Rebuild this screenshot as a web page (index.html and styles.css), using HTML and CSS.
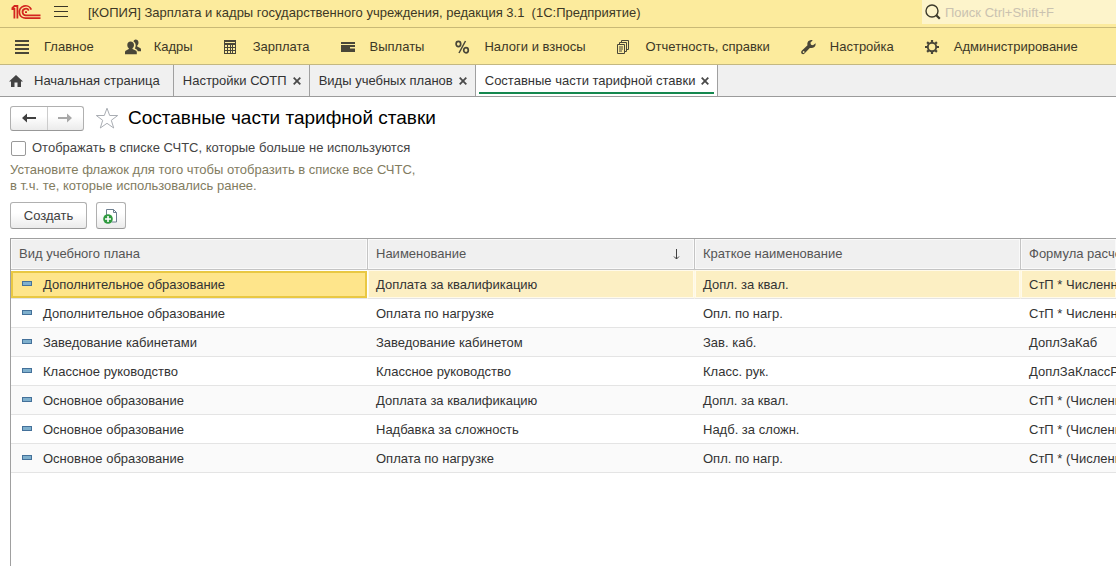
FILE: index.html
```html
<!DOCTYPE html>
<html lang="ru">
<head>
<meta charset="utf-8">
<title>Составные части тарифной ставки</title>
<link rel="stylesheet" href="styles.css">
</head>
<body>
<header class="titlebar">
  <svg class="logo" viewBox="0 0 30 16" fill="none" stroke="#d3261f" stroke-width="1.8">
    <path d="M.5 5H3.400V14.500M1 4.500 3.500 2H6.400V14.500"/>
    <path d="M20.300 5.700A6.200 6.200 0 1 0 15 14.200H29.500"/>
    <path d="M17.800 6.500A3.300 3.300 0 1 0 15 11.300H29.500"/>
    <path d="M14 8.200h2"/>
  </svg>
  <button class="burger" aria-label="Меню"><svg viewBox="0 0 14 12" width="14" height="12" stroke="#3a3626"><path d="M0 .5h14M0 5.500h14M0 10.500h14"/></svg></button>
  <h1 class="app-title">[КОПИЯ] Зарплата и кадры государственного учреждения, редакция 3.1&nbsp; (1С:Предприятие)</h1>
  <label class="search">
    <svg viewBox="0 0 16 16" width="16" height="16" fill="none" stroke="#3d3a2c"><circle cx="7" cy="7" r="6" stroke-width="1.4"/><path d="m11.300 11.300 3.500 3.500" stroke-width="2.200"/></svg>
    <input type="search" placeholder="Поиск Ctrl+Shift+F" aria-label="Поиск">
  </label>
</header>

<nav class="sections">
  <a href="#" class="section"><svg viewBox="0 0 16 16"><path d="M0 1h14v2H0zM0 5h14v2H0zM0 9h14v2H0zM0 13h14v2H0z"/></svg>Главное</a>
  <a href="#" class="section"><svg viewBox="0 0 16 16"><path d="M10.600.5c1.700 0 2.900 1.200 2.900 3 0 1.300-.5 2.400-1.300 3v1l2.900 1.400c.7.400.9 1 .9 1.900v1.400h-3.200c-.3-1-1-1.700-2-2.100l-.9-.5c.6-1.100.8-2.300.8-3.300 0-1.700-.9-3.200-2.200-3.900.4-1.200 1.200-1.900 2.100-1.900z"/><path d="M5.600 2.600c2 0 3.400 1.300 3.400 3.300 0 1.400-.7 2.600-1.500 3.200v.9l3.200 1.400c.8.400 1.100 1 1.100 1.900v1.900H0v-1.900c0-.9.300-1.500 1.100-1.900L3.800 10v-.9c-.9-.6-1.500-1.800-1.500-3.200 0-2 1.300-3.300 3.300-3.300z"/></svg>Кадры</a>
  <a href="#" class="section"><svg viewBox="0 0 16 16"><path fill-rule="evenodd" d="M0 1h12v14H0zM1 3v1h10V3zM1 6v2h2V6zM4 6v2h2V6zM7 6v2h1V6zM9 6v2h2V6zM1 9v2h2V9zM4 9v2h2V9zM7 9v2h1V9zM9 9v2h2V9zM1 12v2h2v-2zM4 12v2h2v-2zM7 12v2h1v-2zM9 12v2h2v-2z"/></svg>Зарплата</a>
  <a href="#" class="section"><svg viewBox="0 0 16 16"><path d="M0 3h14v2H0zM0 6h14v2H9v1.500h5V13H0z"/></svg>Выплаты</a>
  <a href="#" class="section"><svg viewBox="0 0 16 16" fill="none" stroke="#494638" stroke-width="1.700"><ellipse cx="3.400" cy="5" rx="2.300" ry="2.600"/><ellipse cx="11" cy="11.200" rx="2.300" ry="2.600"/><path d="M10.500 2 4 14" stroke-width="1.500"/></svg>Налоги и взносы</a>
  <a href="#" class="section"><svg viewBox="0 0 16 16" fill="none" stroke="#494638"><path d="M.5 5.500h7v9h-7zM2.500 5.500v-2h7v9h-2M4.500 3.500v-2h7v9h-2M2 8h4M2 10h4M2 12h3"/></svg>Отчетность, справки</a>
  <a href="#" class="section"><svg viewBox="0 0 16 16"><path d="M14.600 4.200 12 6.200 10 5.800l-.6-2L11.700 1.200C9.500.6 7.400 1.500 6.600 3.400c-.4 1-.3 2-.1 2.900L.7 11.800c-1.700 1.900.8 4.500 2.800 2.800l5.300-5.700c3.300.9 6.300-1.200 5.800-4.700zM2.300 12.200a.9.900 0 1 1 0 1.700.9.900 0 0 1 0-1.700z"/></svg>Настройка</a>
  <a href="#" class="section"><svg viewBox="0 0 16 16" fill="none" stroke="#494638"><circle cx="7" cy="8" r="4.200" stroke-width="1.900"/><path stroke-width="2.200" d="M7 1v2.500M7 12.500V15M0 8h2.500M11.500 8H14M2.100 3.100l1.700 1.700M10.200 11.200l1.700 1.700M2.100 12.900l1.700-1.700M10.200 4.800l1.700-1.700"/></svg>Администрирование</a>
</nav>

<div class="tabs">
  <div class="tab home"><svg viewBox="0 0 14 12" width="14" height="12" fill="#434343"><path d="M7 0 0 6.500h2V12h3.500V7.500h3V12H12V6.500h2z"/></svg><a href="#">Начальная страница</a></div>
  <div class="tab"><a href="#">Настройки СОТП</a><button class="close" aria-label="Закрыть"><svg viewBox="0 0 8 8"><path d="m.7.700 6.600 6.600M7.300.7.700 7.300"/></svg></button></div>
  <div class="tab"><a href="#">Виды учебных планов</a><button class="close" aria-label="Закрыть"><svg viewBox="0 0 8 8"><path d="m.7.700 6.600 6.600M7.300.7.700 7.300"/></svg></button></div>
  <div class="tab active"><a href="#">Составные части тарифной ставки</a><button class="close" aria-label="Закрыть"><svg viewBox="0 0 8 8"><path d="m.7.700 6.600 6.600M7.300.7.700 7.300"/></svg></button></div>
</div>

<main class="page">
  <div class="heading">
    <div class="history">
      <button aria-label="Назад"><svg viewBox="0 0 14 10" width="14" height="10"><path d="M0 5 5 .5V4h9v2H5v3.500z" fill="#404040"/></svg></button>
      <button aria-label="Вперед"><svg viewBox="0 0 14 10" width="14" height="10"><path d="M14 5 9 .5V4H0v2h9v3.500z" fill="#a8a8a8"/></svg></button>
    </div>
    <button class="star" aria-label="В избранное"><svg viewBox="0 0 24 22" width="24" height="22" fill="#fff" stroke="#a9adb3"><path d="m12 1.200 2.700 7.300h8l-6.400 4.800 2.400 7.700L12 16.300 5.300 21l2.400-7.700L1.300 8.500h8z"/></svg></button>
    <h2>Составные части тарифной ставки</h2>
  </div>
  <label class="check"><input type="checkbox">Отображать в списке СЧТС, которые больше не используются</label>
  <p class="hint">Установите флажок для того чтобы отобразить в списке все СЧТС,<br>в т.ч. те, которые использовались ранее.</p>
  <div class="commands">
    <button class="btn create">Создать</button>
    <button class="btn copy" aria-label="Скопировать"><svg viewBox="0 0 16 16" width="16" height="16"><path d="M3.500 8V1.500h7l3 3v9.500H9" fill="#fff" stroke="#6d7f90"/><path d="M10.500 1.500v3h3" fill="none" stroke="#6d7f90"/><circle cx="5" cy="11" r="4.800" fill="#2f9a3f"/><path d="M5 8v6M2 11h6" stroke="#fff" stroke-width="1.600"/></svg></button>
  </div>

  <div class="list">
    <table>
      <colgroup><col class="c-kind"><col class="c-name"><col class="c-short"><col></colgroup>
      <thead>
        <tr><th>Вид учебного плана</th><th><span class="sorted">Наименование<svg viewBox="0 0 7 11" width="7" height="11" fill="none" stroke="#404040"><path d="M3.500 0v10M1 7.500l2.500 2.500L6 7.500" /></svg></span></th><th>Краткое наименование</th><th>Формула расчета</th></tr>
      </thead>
      <tbody>
        <tr class="selected"><td><i class="mark"></i>Дополнительное образование</td><td>Доплата за квалификацию</td><td>Допл. за квал.</td><td>СтП * Численность</td></tr>
        <tr><td><i class="mark"></i>Дополнительное образование</td><td>Оплата по нагрузке</td><td>Опл. по нагр.</td><td>СтП * Численность</td></tr>
        <tr><td><i class="mark"></i>Заведование кабинетами</td><td>Заведование кабинетом</td><td>Зав. каб.</td><td>ДоплЗаКаб</td></tr>
        <tr><td><i class="mark"></i>Классное руководство</td><td>Классное руководство</td><td>Класс. рук.</td><td>ДоплЗаКлассРук</td></tr>
        <tr><td><i class="mark"></i>Основное образование</td><td>Доплата за квалификацию</td><td>Допл. за квал.</td><td>СтП * (Численность</td></tr>
        <tr><td><i class="mark"></i>Основное образование</td><td>Надбавка за сложность</td><td>Надб. за сложн.</td><td>СтП * (Численность</td></tr>
        <tr><td><i class="mark"></i>Основное образование</td><td>Оплата по нагрузке</td><td>Опл. по нагр.</td><td>СтП * (Численность</td></tr>
      </tbody>
    </table>
  </div>
</main>
</body>
</html>
```
FILE: styles.css
```css
* { box-sizing: border-box; }
body {
  margin: 0;
  min-height: 100vh;
  display: flex;
  flex-direction: column;
  overflow: hidden;
  background: #fff;
  color: #333;
  font: 13px/16px "Liberation Sans", Arial, sans-serif;
}
button { padding: 0; border: 0; background: none; font: inherit; color: inherit; }
a { color: inherit; text-decoration: none; }
svg { display: block; flex: none; }

.titlebar {
  display: flex;
  align-items: center;
  height: 28px;
  padding: 0 0 3px 11px;
  background: #fceb9d;
  border-bottom: 1px solid #c9b976;
}
.logo { width: 30px; height: 16px; }
.burger { margin: 0 20px 0 13px; }
.app-title { flex: 1; margin: 0; padding-top: 2px; font-size: 13px; font-weight: 400; white-space: nowrap; color: #3c3826; }
.search {
  display: flex;
  align-items: center;
  gap: 4px;
  width: 194px;
  height: 24px;
  padding-left: 3px;
  background: #fdf4cb;
}
.search input { flex: 1; min-width: 0; padding: 2px 0 0; border: 0; outline: 0; background: none; font: inherit; }
.search input::placeholder { color: #cac2b0; opacity: 1; }

.sections {
  display: flex;
  align-items: center;
  gap: 31px;
  height: 37px;
  padding: 1px 0 0 15px;
  background: #fceb9d;
  border-bottom: 1px solid #c4b881;
  white-space: nowrap;
}
.section { display: flex; align-items: center; gap: 13px; color: #3c3826; }
.section svg { width: 16px; height: 16px; }
.section svg:not([fill]) { fill: #494638; }

.tabs {
  display: flex;
  height: 32px;
  background: #f0f0f0;
  border-bottom: 1px solid #9b9b9b;
  white-space: nowrap;
}
.tab {
  display: flex;
  align-items: center;
  gap: 6px;
  padding: 0 8px 0 9px;
  border-right: 1px solid #a0a0a0;
}
.tab.home { gap: 11px; padding: 0 13px 0 9px; }
.tab.active {
  background: linear-gradient(#15884f, #15884f) 3px 27px / calc(100% - 6px) 2px no-repeat #fff;
}
.close svg { width: 8px; height: 8px; stroke: #4a4a4a; stroke-width: 1.8; }

.page { flex: 1; display: flex; flex-direction: column; padding: 8px 0 0 10px; }
.heading { display: flex; align-items: center; height: 26px; }
.history {
  display: flex;
  width: 74px;
  height: 25px;
  border: 1px solid #b0b0b0;
  border-bottom-color: #989898;
  border-radius: 3px;
  background: linear-gradient(#fff 40%, #ebebeb);
}
.history button { flex: 1; display: flex; align-items: center; justify-content: center; }
.history button + button { border-left: 1px solid #ccc; }
.star { margin: 0 9px 0 11px; }
.heading h2 { margin: 0; font-size: 19px; line-height: 24px; font-weight: 400; color: #000; }
.check { display: flex; align-items: center; gap: 6px; margin-top: 9px; color: #444; }
.check input {
  appearance: none;
  width: 15px;
  height: 15px;
  margin: 0 0 0 1px;
  border: 1px solid #999;
  border-radius: 2px;
  background: #fff;
}
.hint { margin: 6px 0 0; color: #827c5f; }
.commands { display: flex; gap: 9px; margin-top: 8px; }
.btn {
  display: flex;
  align-items: center;
  justify-content: center;
  height: 27px;
  border: 1px solid #b0b0b0;
  border-bottom-color: #989898;
  border-radius: 3px;
  background: linear-gradient(#fff 40%, #ebebeb);
  color: #404040;
}
.create { width: 77px; }
.copy { width: 30px; }

.list { flex: 1; margin-top: 9px; border: solid #a0a0a0; border-width: 1px 0 0 1px; overflow: hidden; }
table { width: 100%; table-layout: fixed; border-collapse: separate; border-spacing: 0; }
.c-kind { width: 357px; }
.c-name { width: 327px; }
.c-short { width: 326px; }
th, td { padding: 0 8px; text-align: left; white-space: nowrap; overflow: hidden; font-weight: 400; }
th:last-child, td:last-child { padding-right: 0; }
th {
  height: 31px;
  color: #555;
  background: #f0f0f0;
  border-right: 1px solid #c4c4c4;
  border-bottom: 1px solid #c4c4c4;
  box-shadow: inset 0 0 0 1px #fafafa;
}
.sorted { display: flex; align-items: center; justify-content: space-between; padding-right: 6px; }
td { height: 29px; padding-top: 2px; border-bottom: 1px solid #e4e4e4; }
tbody tr:nth-child(odd) { background: #fafafa; }
tbody .selected td { background: #fcefc3; border-right: 1px solid #fff8e0; box-shadow: inset 0 0 0 1px #fffaeb; }
tbody .selected td:first-child {
  background: #fee58b;
  border-right-color: #fff;
  box-shadow: inset 0 1px #fff, inset 0 0 0 2px #e9c843, inset 0 3px #e9c843;
}
thead tr th:last-child, tbody tr td:last-child { border-right: 0; }
.mark {
  display: inline-block;
  width: 10px;
  height: 5px;
  margin: 0 11px 3px 3px;
  border: 1px solid #44719a;
  background: #7fb0cd;
}
```
